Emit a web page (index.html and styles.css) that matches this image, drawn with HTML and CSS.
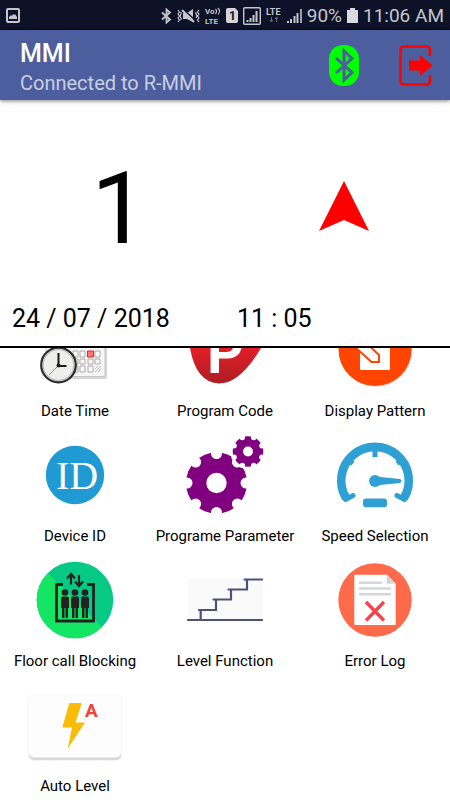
FILE: index.html
```
<!DOCTYPE html>
<html lang="en">
<head>
<meta charset="utf-8">
<meta name="viewport" content="width=device-width, initial-scale=1">
<title>MMI</title>
<link rel="stylesheet" href="styles.css">
</head>
<body>
<div class="status">
  <svg class="status-picture" width="14" height="15" viewBox="0 0 14 15"><rect x="1" y="1" width="12" height="13" rx="1" fill="none" stroke="#c4c6cc" stroke-width="2"/><path d="M3 11V9l2-2 1 1 1-2 1 1 1-1 2 3v2z" fill="#c4c6cc"/></svg>
  <div class="status-right">
    <svg width="11" height="16" viewBox="0 0 11 16"><path d="M1 4.500l8 7-3.500 3V1.500l3.500 3-8 7" fill="none" stroke="#c4c6cc" stroke-width="1.800"/></svg>
    <svg width="23" height="16" viewBox="0 0 23 16"><path d="M6 5h4l6-4v13l-6-3H6z" fill="#c4c6cc"/><path d="M7 2l11 10" stroke="#0d1228" stroke-width="1.500"/><path d="M5 2l12 12" stroke="#c4c6cc" stroke-width="2"/><path d="M1 2l1.500 2L1 6l1.500 2L1 10l1.500 2L1 14M4 4v2L3 8l1 2v2M22 2l-1.500 2L22 6l-1.500 2L22 10l-1.500 2 1.500 2M19 4v2l1 2-1 2" fill="none" stroke="#c4c6cc" stroke-width="1.200"/></svg>
    <svg class="glyph" width="16" height="18" viewBox="0 0 16 18"><text x="0" y="7" font-size="8">Vo</text><path d="M10.500 2q2 2 0 5M13 1q3 3 0 6.500" fill="none" stroke="#c4c6cc" stroke-width="1.100"/><text x="0" y="17" font-size="8">LTE</text></svg>
    <svg class="glyph" width="12" height="16" viewBox="0 0 12 16"><path d="M2 0h7l3 3v10q0 2-2 2H2q-2 0-2-2V2q0-2 2-2z" fill="#d4d5da"/><text class="sim" x="3" y="12" font-size="12">1</text></svg>
    <svg width="18" height="18" viewBox="0 0 18 18"><rect x=".7" y=".7" width="16.600" height="16.600" rx="1" fill="none" stroke="#c4c6cc" stroke-width="1.400"/><path d="M4.500 15v-2M7.500 15v-4M10.500 15V8M13.500 15V4" stroke="#c4c6cc" stroke-width="2"/></svg>
    <svg class="glyph" width="16" height="17" viewBox="0 0 16 17"><text x="0" y="8" font-size="9">LTE</text><path d="M5.500 10v5M4 13l1.500 2L7 13M10.500 15v-5M9 12l1.500-2 1.500 2" fill="none" stroke="#62667a"/></svg>
    <svg width="15" height="16" viewBox="0 0 15 16"><path d="M1 15v-2M4 15v-4M7.500 15V8M10.500 15V5" stroke="#c4c6cc" stroke-width="2"/><path d="M14 15V1" stroke="#9da0ab" stroke-width="2"/></svg>
    <span class="battery">90%<svg width="11" height="15" viewBox="0 0 11 15"><path d="M3 0h5v2h3v13H0V2h3z" fill="#d9dade"/></svg></span>
    <time>11:06 AM</time>
  </div>
</div>
<header class="appbar">
  <div class="titles">
    <h1>MMI</h1>
    <p>Connected to R-MMI</p>
  </div>
  <div class="actions">
    <button type="button" aria-label="Bluetooth"><svg width="30" height="41" viewBox="0 0 30 41"><rect width="30" height="41" rx="14" fill="#0f0"/><path d="M7 13l16 14.500-8 7.500V6l8 7.500L7 28" fill="none" stroke="#4c5e9d" stroke-width="3"/></svg></button>
    <button type="button" aria-label="Exit"><svg width="34" height="41" viewBox="0 0 34 41"><path d="M31 11V5q0-3.500-3.500-3.500H5Q1.500 1.500 1.500 5v31q0 3.500 3.500 3.500h22.500q3.500 0 3.500-3.500v-6" fill="none" stroke="#f00" stroke-width="2.600"/><path d="M10 15.500h11V10l12.500 10.500L21 31v-5.500H10z" fill="#f00"/></svg></button>
  </div>
</header>
<section class="display">
  <div class="readout">
    <div class="floor">1</div>
    <svg class="direction" width="50" height="56" viewBox="0 0 50 56"><path d="M25 0l25 50-25-11L0 50z" fill="#f00"/></svg>
  </div>
  <div class="clock"><span>24 / 07 / 2018</span><span>11 : 05</span></div>
</section>
<main class="scroller">
<nav class="menu">
  <button type="button"><svg viewBox="0 0 100 100"><rect x="22" y="30" width="60" height="49" rx="2" fill="#d5d5d5"/><rect x="21" y="30" width="59" height="46.500" rx="1" fill="#f6f6f6" stroke="#bbb" stroke-width=".8"/><g fill="#fafafa" stroke="#aaa" stroke-width="1"><path d="M48 51h5v6h-5zM55 51h5v6h-5zM70 51h5v6h-5zM48 59h5v5h-5zM55 59h5v5h-5zM63 59h5v5h-5zM70 59h5v5h-5zM48 66h5v6h-5zM55 66h5v6h-5zM63 66h5v6h-5z"/></g><path d="M62.500 51h6v6h-6z" fill="#f77" stroke="#e22"/><path d="M70 69l3-3M70 72l6-6M73 72l3-3" stroke="#bbb"/><circle cx="33.500" cy="65" r="17.300" fill="#eeeeec" stroke="#292b2d" stroke-width="2.200"/><circle cx="33.500" cy="65" r="15.500" fill="none" stroke="#999" stroke-width=".7"/><path d="M33.500 53v13h8" fill="none" stroke="#191919" stroke-width="2"/><path d="M33 66l-9 9" stroke="#f55"/><circle cx="33.500" cy="65.500" r="2" fill="#191919"/></svg><span>Date Time</span></button>
  <button type="button"><svg viewBox="0 0 100 100"><defs><linearGradient id="shield" x2="0" y2="1"><stop offset=".5" stop-color="#e01f26"/><stop offset="1" stop-color="#ad1e26"/></linearGradient></defs><path d="M13 24Q50 4 88 24 91 37 86 48 65 83.500 44 83.500 21 82.500 15 48z" fill="url(#shield)"/><text class="letter-p" x="32" y="73">P</text></svg><span>Program Code</span></button>
  <button type="button"><svg viewBox="0 0 100 100"><circle cx="51.500" cy="51" r="36" fill="#e2e2e2"/><circle cx="50" cy="49.500" r="36.500" fill="#ff4500"/><rect x="35" y="30" width="30" height="40" rx="1" fill="#fff"/><path d="M30 47l16.500 15H54v-7L38 40" fill="#fff" stroke="#ff4500" stroke-width="2"/></svg><span>Display Pattern</span></button>

  <button type="button"><svg viewBox="0 0 100 100"><circle cx="50" cy="50" r="29.200" fill="#1f9ad2"/><text class="letter-id" x="52" y="64" text-anchor="middle">ID</text></svg><span>Device ID</span></button>
  <button type="button"><svg viewBox="0 0 100 100"><circle cx="41.500" cy="58" r="30.500" fill="#800080"/><g fill="#fff"><circle cx="41.500" cy="58" r="10.200"/><circle cx="71" cy="58" r="5.500"/><circle cx="62.400" cy="78.900" r="5.500"/><circle cx="41.500" cy="87.500" r="5.500"/><circle cx="20.600" cy="78.900" r="5.500"/><circle cx="12" cy="58" r="5.500"/><circle cx="20.600" cy="37.100" r="5.500"/><circle cx="41.500" cy="28.500" r="5.500"/><circle cx="62.400" cy="37.100" r="5.500"/><circle cx="73" cy="26.500" r="16.500"/></g><circle cx="73" cy="26.500" r="15.300" fill="#800080"/><g fill="#fff"><circle cx="73" cy="26.500" r="5"/><circle cx="86.900" cy="32.200" r="2.700"/><circle cx="78.700" cy="40.400" r="2.700"/><circle cx="67.300" cy="40.400" r="2.700"/><circle cx="59.100" cy="32.200" r="2.700"/><circle cx="59.100" cy="20.800" r="2.700"/><circle cx="67.300" cy="12.600" r="2.700"/><circle cx="78.700" cy="12.600" r="2.700"/><circle cx="86.900" cy="20.800" r="2.700"/></g></svg><span>Programe Parameter</span></button>
  <button type="button"><svg viewBox="0 0 100 100"><g fill="none" stroke="#2fa0d3" stroke-linejoin="round"><path d="M21 73A33.800 33.800 0 1 1 79 73" stroke-width="8.600"/><path d="M20.500 74.500l7.500-4M79.500 74.500l-7.500-4" stroke-width="5" stroke-linecap="round"/><path d="M50 24v8M23 35l5 3.500M77 35l-5 3.500" stroke-width="5"/></g><g fill="#2fa0d3"><circle cx="50" cy="56" r="5.900"/><path d="M50 51.500L75 54q3 2 0 4L50 60.500z"/><rect x="38" y="73.500" width="24" height="8.800" rx="3"/></g></svg><span>Speed Selection</span></button>

  <button type="button"><svg viewBox="0 0 100 100"><circle cx="50" cy="50" r="38.300" fill="#05c985"/><path d="M22.900 22.900A38.300 38.300 0 1 0 77.100 77.100z" fill="#15e565"/><g fill="none" stroke="#222" stroke-width="2.800"><path d="M38 34.500h-6.500V71h37V34.500H62"/><path d="M46 34.500V24M42 28.500l4-4.500 4 4.500M54 25v11M50 31.500l4 4.500 4-4.500" stroke-width="2.200"/></g><g fill="#222"><circle cx="40" cy="42.500" r="3.300"/><path d="M37.500 46.500h5q1.500 0 1.500 2V58h-1v10h-2.500V58h-1v10H37V58h-1V48.500q0-2 1.500-2z"/><circle cx="50" cy="42.500" r="3.300"/><path d="M47.500 46.500h5q1.500 0 1.500 2V58h-1v10h-2.500V58h-1v10H47V58h-1V48.500q0-2 1.500-2z"/><circle cx="60" cy="42.500" r="3.300"/><path d="M57.500 46.500h5q1.500 0 1.500 2V58h-1v10h-2.500V58h-1v10H57V58h-1V48.500q0-2 1.500-2z"/></g></svg><span>Floor call Blocking</span></button>
  <button type="button"><svg viewBox="0 0 100 100"><rect x="13" y="29" width="75" height="42" fill="#fafafa"/><path d="M13 70h74M25.700 70V60M24 60h17V49.500M38.500 49.500H56v-10M53.500 39.500H72v-10M69.500 29.500H87" fill="none" stroke="#504f7a" stroke-width="2.200" stroke-linecap="round"/></svg><span>Level Function</span></button>
  <button type="button"><svg viewBox="0 0 100 100"><circle cx="50" cy="50" r="36.700" fill="#ff6b4a"/><path d="M30.300 24.700H62l8.700 9V74q0 1-1 1H30.300q-1 0-1-1V25.700q0-1 1-1z" fill="#fff"/><path d="M61.700 24.700l9 9h-9z" fill="#d0d3da"/><path d="M35 32.700h21M35 38.500h30M35 44.300h30" stroke="#d3d6de" stroke-width="2.500" stroke-linecap="round"/><path d="M41 52l18 18.500M59 52L41 70.500" stroke="#f4434a" stroke-width="3.300"/></svg><span>Error Log</span></button>

  <button type="button"><svg viewBox="0 0 100 100"><rect x="3.500" y="19" width="93" height="66.500" rx="5" fill="#ececec"/><rect x="4" y="20" width="92" height="65" rx="5" fill="#d8d8d8"/><rect x="4" y="18" width="92" height="64.500" rx="5" fill="#fdfdfd"/><path d="M44.300 28h12.400L50.500 47.500H60L42.700 73.700 47 52.500h-9.700z" fill="#fbbc05"/><text class="letter-a" x="60" y="41.500">A</text></svg><span>Auto Level</span></button>
</nav>
</main>
</body>
</html>
```
FILE: styles.css
```
* { box-sizing: border-box; }

body {
  margin: 0;
  height: 100vh;
  display: flex;
  flex-direction: column;
  overflow: hidden;
  background: #fff;
  color: #000;
  font-family: Roboto, "Liberation Sans", sans-serif;
}

svg { display: block; flex: none; }

button {
  margin: 0;
  padding: 0;
  border: 0;
  background: none;
  color: inherit;
  font: inherit;
}

.status {
  flex: none;
  display: flex;
  align-items: center;
  justify-content: space-between;
  height: 30px;
  padding: 2px 6px 0;
  border-bottom: 1px solid #050814;
  background: #0d1228;
  color: #c4c6cc;
  font-size: 19px;
}

.status-right,
.battery {
  display: flex;
  align-items: center;
  gap: 5px;
}

.glyph text {
  fill: #c4c6cc;
  font-weight: 700;
}

.glyph .sim { fill: #0d1228; }

.appbar {
  flex: none;
  display: flex;
  align-items: center;
  justify-content: space-between;
  height: 70px;
  padding: 0 17px 0 20px;
  background: #4c5e9d;
  box-shadow: 0 1px 4px rgba(0, 0, 0, 0.5);
}

.titles { padding-top: 6px; }

.titles h1,
.titles p {
  margin: 0;
  font-weight: 400;
}

.titles h1 {
  color: #fff;
  font-size: 25px;
  font-weight: 500;
  line-height: 30px;
}

.titles p {
  color: #c9cfe2;
  font-size: 20px;
  line-height: 28px;
}

.actions {
  display: flex;
  gap: 40px;
}

.display {
  flex: none;
  height: 248px;
  display: flex;
  flex-direction: column;
  border-bottom: 2px solid #000;
}

.readout {
  flex: 1;
  display: grid;
  grid-template-columns: 53% 47%;
  align-items: center;
  justify-items: center;
  padding-top: 16px;
}

.floor {
  font-size: 100px;
  line-height: 118px;
}

.clock {
  display: grid;
  grid-template-columns: 1fr 1fr;
  padding: 0 0 10px 12px;
  font-size: 25px;
  line-height: 34px;
}

.clock span + span { padding-left: 6px; }

.scroller {
  flex: 1;
  min-height: 0;
  overflow: hidden;
}

.menu {
  display: grid;
  grid-template-columns: repeat(3, 1fr);
  margin-top: -48px;
}

.menu button {
  display: flex;
  flex-direction: column;
  align-items: center;
  height: 125px;
  font-size: 15px;
  line-height: 22px;
  white-space: nowrap;
}

.menu svg {
  width: 100px;
  height: 100px;
}

.letter-p {
  fill: #fff;
  font-size: 57px;
  font-weight: 700;
}

.letter-id {
  fill: #fff;
  font-family: "Liberation Serif", serif;
  font-size: 40px;
}

.letter-a {
  fill: #f04438;
  font-size: 19px;
  font-weight: 700;
}
```
